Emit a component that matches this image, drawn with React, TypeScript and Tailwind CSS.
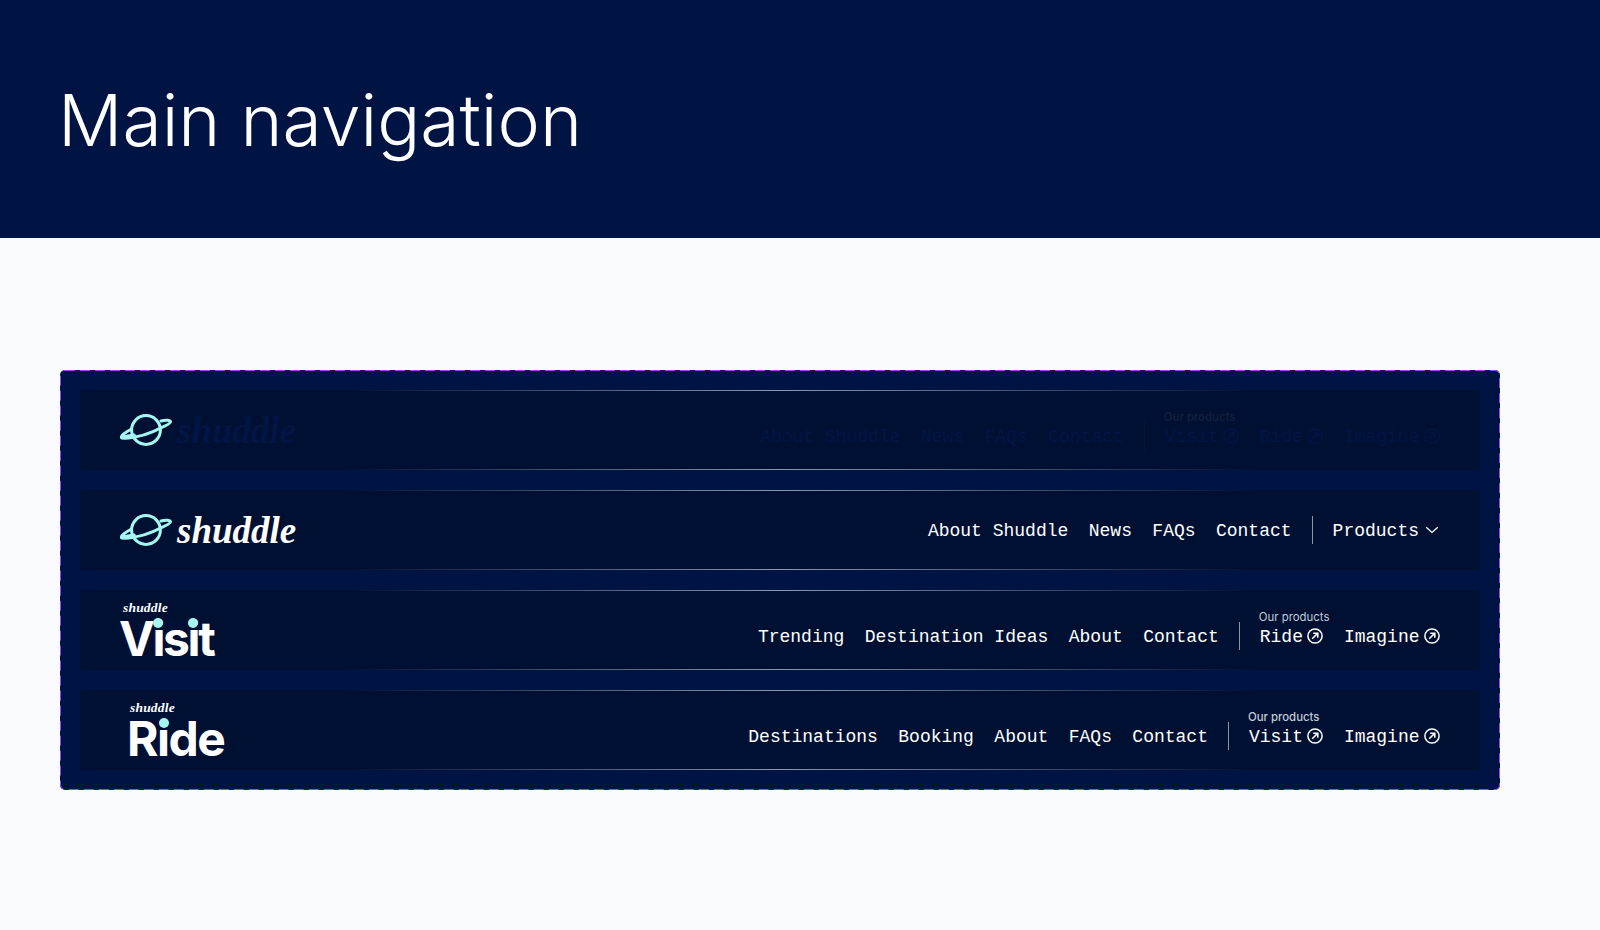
import React from "react";

const mono = "font-['Liberation_Mono','DejaVu_Sans_Mono',monospace]";

function Planet() {
  return (
    <svg width="52" height="32" viewBox="0 0 52 32" fill="none" className="shrink-0">
      <circle cx="26" cy="16" r="14.4" stroke="#A5F8F2" strokeWidth="3" />
      <path
        d="M11.5 15C5 18.5 0.5 22 1.5 23.6C3 25.6 21 23 33 17.6C42 13.5 51 9.5 50.5 7.6C50 6 45.5 5.8 41 7"
        stroke="#A5F8F2"
        strokeWidth="3"
        strokeLinecap="round"
        strokeLinejoin="round"
      />
      <path d="M2 23.4L14 21.4" stroke="#A5F8F2" strokeWidth="3.6" strokeLinecap="round" />
    </svg>
  );
}

function Arrow() {
  return (
    <svg width="16" height="16" viewBox="0 0 16 16" fill="none" className="shrink-0">
      <circle cx="8" cy="8" r="7.1" stroke="currentColor" strokeWidth="1.5" />
      <path d="M5.2 10.8L10.6 5.4M6.2 5.2H10.8V9.8" stroke="currentColor" strokeWidth="1.5" />
    </svg>
  );
}

function Chevron() {
  return (
    <svg width="16" height="16" viewBox="0 0 16 16" fill="none" className="shrink-0">
      <path d="M2.2 5.2L8 10.4L13.8 5.2" stroke="currentColor" strokeWidth="1.3" />
    </svg>
  );
}

function Script({ className }: { className: string }) {
  return (
    <span className={`font-['Liberation_Serif',serif] italic leading-none ${className}`}>shuddle</span>
  );
}

function SubBrand({
  word,
  dots,
  track,
  scriptOffset,
}: {
  word: string;
  dots: number[];
  track: string;
  scriptOffset: string;
}) {
  return (
    <div className="flex flex-col items-start">
      <Script className={`h-[14px] text-[13.5px] font-bold tracking-[0.2px] text-white ${scriptOffset}`} />
      <div
        className={`relative mt-[3px] font-['Inter',sans-serif] text-[48px] leading-[42px] font-bold text-white ${track}`}
      >
        {word}
        {dots.map((x) => (
          <span
            key={x}
            style={{ left: x }}
            className="absolute top-0 h-[10px] w-[10px] rounded-full bg-[#A5F8F2]"
          />
        ))}
      </div>
    </div>
  );
}

function Row({ children }: { children: React.ReactNode }) {
  return (
    <div className="relative flex h-[80px] items-center justify-between rounded-[4px] bg-[#001033] px-[40px]">
      <div className="absolute top-0 right-0 left-0 h-px bg-[linear-gradient(90deg,transparent_19%,#8c98ad_50%,transparent_84%)]" />
      <div className="absolute right-0 bottom-0 left-0 h-px bg-[linear-gradient(90deg,transparent_19%,#8c98ad_50%,transparent_84%)]" />
      {children}
    </div>
  );
}

function Links({ items, color }: { items: string[]; color: string }) {
  return (
    <div className={`flex translate-y-px items-center gap-[20.4px] ${mono} text-[18px] leading-[24px] ${color}`}>
      {items.map((t) => (
        <span key={t} className="whitespace-pre">
          {t}
        </span>
      ))}
    </div>
  );
}

function Products({
  items,
  color,
  labelColor,
  divider,
}: {
  items: string[];
  color: string;
  labelColor: string;
  divider: string;
}) {
  return (
    <div className="flex items-center">
      <div className={`mx-[20px] h-[28px] w-px ${divider}`} />
      <div className="relative">
        <span
          className={`absolute -top-[14px] -left-[1px] font-['Inter',sans-serif] text-[11.4px] leading-[14px] whitespace-nowrap ${labelColor}`}
        >
          Our products
        </span>
        <div className={`flex items-center gap-[20.4px] ${mono} text-[18px] leading-[24px] ${color}`}>
          {items.map((t) => (
            <span key={t} className="flex items-center gap-[4.5px]">
              <span className="translate-y-px">{t}</span>
              <Arrow />
            </span>
          ))}
        </div>
      </div>
    </div>
  );
}

export default function App() {
  return (
    <div className="min-h-[930px] bg-[#FAFBFF]">
      <header className="flex h-[238px] items-center bg-[#001444] pt-[4px] pl-[58px]">
        <h1 className="font-['Inter',sans-serif] text-[71.5px] leading-none font-light text-white">Main navigation</h1>
      </header>
      <main className="ml-[60px] w-[1440px] pt-[132px]">
        <section className="relative flex flex-col gap-[20px] rounded-[5px] bg-[#001443] p-[20px]">
          <svg
            width="1440"
            height="420"
            viewBox="0 0 1440 420"
            fill="none"
            className="pointer-events-none absolute top-0 left-0"
          >
            <rect x="0.5" y="0.5" width="1439" height="419" rx="4.5" stroke="#9747FF" strokeDasharray="10 5" />
          </svg>
          <Row>
            <div className="flex items-center gap-[5px]">
              <Planet />
              <Script className="text-[37px] font-bold text-[#001645]" />
            </div>
            <div className="flex items-center pt-[12px]">
              <Links items={["About Shuddle", "News", "FAQs", "Contact"]} color="text-[#001645]" />
              <Products
                items={["Visit", "Ride", "Imagine"]}
                color="text-[#001645]"
                labelColor="font-medium text-[#14213c]"
                divider="bg-[#001645]"
              />
            </div>
          </Row>
          <Row>
            <div className="flex items-center gap-[5px]">
              <Planet />
              <Script className="text-[37px] font-bold text-white" />
            </div>
            <div className="flex items-center text-white">
              <Links items={["About Shuddle", "News", "FAQs", "Contact"]} color="text-white" />
              <div className="mx-[20px] h-[28px] w-px bg-[#8b95a8]" />
              <span className={`flex items-center gap-[5px] ${mono} text-[18px] leading-[24px]`}>
                <span className="translate-y-px">Products</span>
                <Chevron />
              </span>
            </div>
          </Row>
          <Row>
            <div className="-ml-[1px]">
              <SubBrand word="Visit" dots={[34, 69]} track="tracking-[-2.4px]" scriptOffset="ml-[4px]" />
            </div>
            <div className="flex items-center pt-[12px]">
              <Links items={["Trending", "Destination Ideas", "About", "Contact"]} color="text-white" />
              <Products
                items={["Ride", "Imagine"]}
                color="text-white"
                labelColor="text-[#c4cad6]"
                divider="bg-[#8b95a8]"
              />
            </div>
          </Row>
          <Row>
            <div className="ml-[7px]">
              <SubBrand word="Ride" dots={[31.5]} track="tracking-[-1.5px]" scriptOffset="ml-[3px]" />
            </div>
            <div className="flex items-center pt-[12px]">
              <Links items={["Destinations", "Booking", "About", "FAQs", "Contact"]} color="text-white" />
              <Products
                items={["Visit", "Imagine"]}
                color="text-white"
                labelColor="font-medium text-[#c4cad6]"
                divider="bg-[#8b95a8]"
              />
            </div>
          </Row>
        </section>
      </main>
    </div>
  );
}
